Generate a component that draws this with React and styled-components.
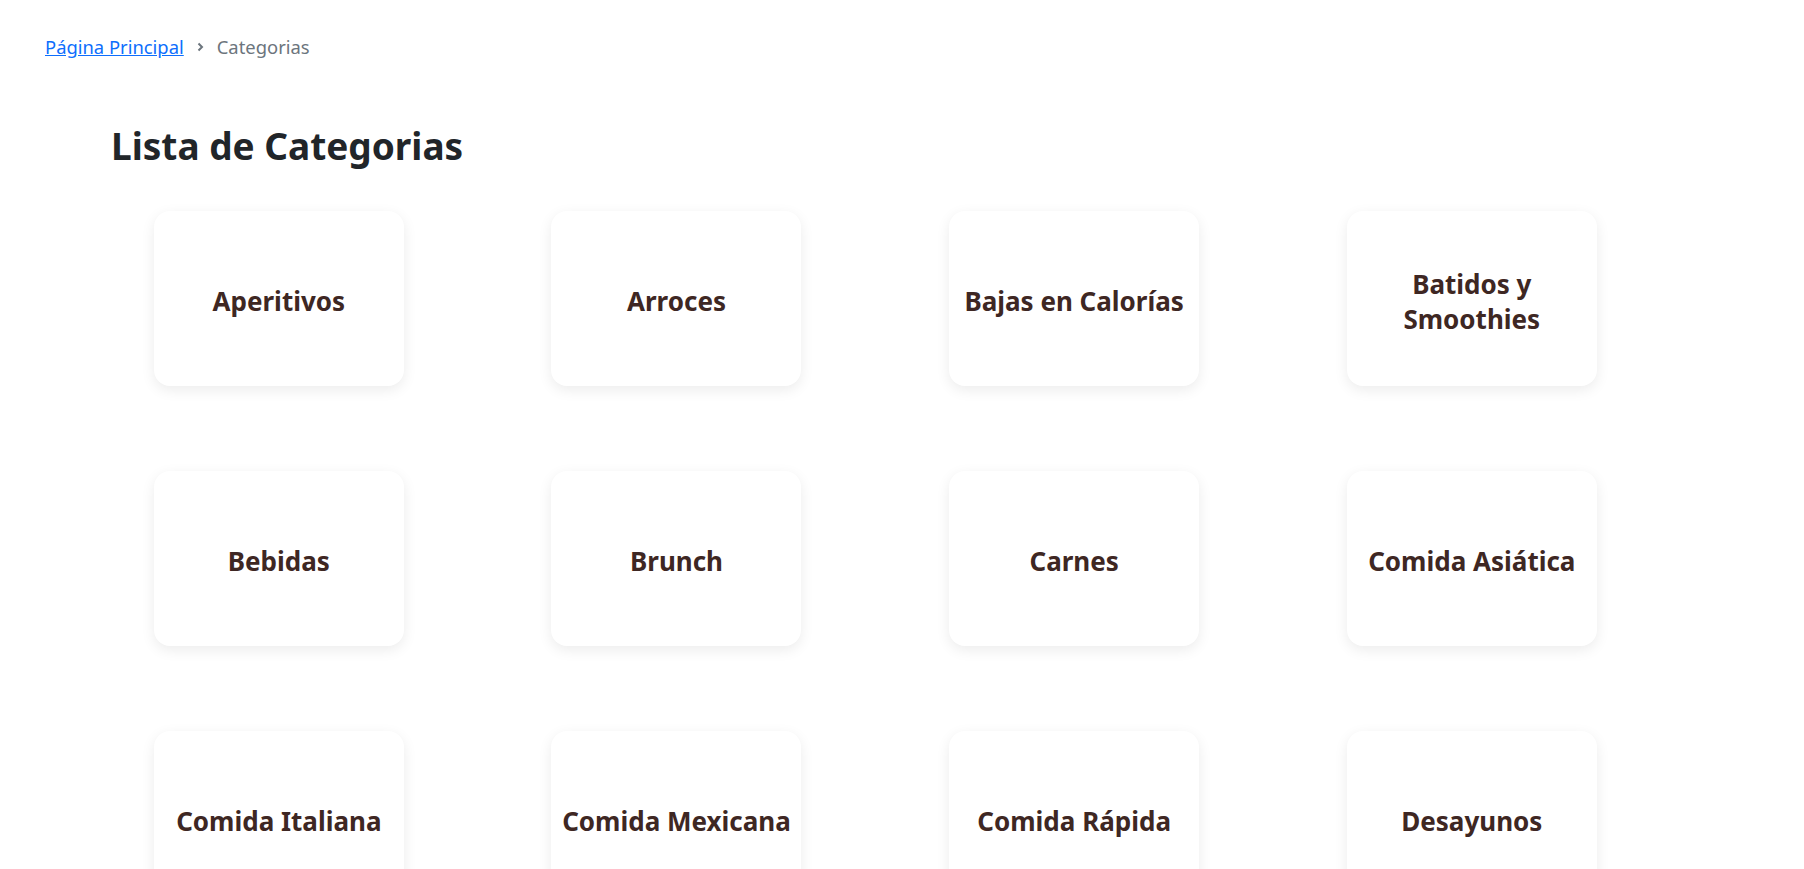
import React from 'react';
import styled, { createGlobalStyle } from 'styled-components';

const GlobalStyle = createGlobalStyle`
    body {
        margin: 0;
        background: #fff;
        font-family: "Noto Sans", "Open Sans", sans-serif;
        color: #212529;
    }
`;

const Page = styled.div`
    width: 100%;
    min-height: 869px;
`;

const Breadcrumb = styled.nav`
    display: flex;
    align-items: center;
    gap: 13px;
    padding: 34px 45px 0;
    font-size: 18.4px;
    line-height: 26px;
`;

const Crumb = styled.a`
    color: #0d6efd;
    text-decoration: underline;
    cursor: pointer;
`;

const Current = styled.span`
    color: #6c757d;
`;

const Divider = styled.svg`
    width: 7px;
    height: 10px;
    color: #6c757d;
`;

const Section = styled.section`
    padding: 64px 0 0 80px;
`;

const Title = styled.h1`
    margin: 0 0 43px 31px;
    font-size: 37px;
    font-weight: 700;
    line-height: 1.2;
    color: #212529;
`;

const Grid = styled.div`
    display: grid;
    grid-template-columns: repeat(4, 397.67px);
    row-gap: 85px;
    justify-items: center;
`;

const Card = styled.div`
    width: 250px;
    height: 175px;
    box-sizing: border-box;
    padding: 6px 4px 0;
    background: #fff;
    border-radius: 16px;
    box-shadow: 0 4px 14px rgba(0, 0, 0, 0.08);
    display: flex;
    align-items: center;
    justify-content: center;
    text-align: center;
`;

const CardTitle = styled.h3`
    margin: 0;
    font-size: 26px;
    font-weight: 700;
    line-height: 35px;
    color: #3e2723;
`;

const categories = [
    'Aperitivos', 'Arroces', 'Bajas en Calorías', 'Batidos y Smoothies',
    'Bebidas', 'Brunch', 'Carnes', 'Comida Asiática',
    'Comida Italiana', 'Comida Mexicana', 'Comida Rápida', 'Desayunos',
];

export default function App() {
    return (
        <Page>
            <GlobalStyle />
            <Breadcrumb>
                <Crumb>Página Principal</Crumb>
                <Divider viewBox="0 0 7 10">
                    <path d="M1.5 1.5 L5 5 L1.5 8.5" fill="none" stroke="currentColor" strokeWidth="2" />
                </Divider>
                <Current>Categorias</Current>
            </Breadcrumb>
            <Section>
                <Title>Lista de Categorias</Title>
                <Grid>
                    {categories.map(name => (
                        <Card key={name}>
                            <CardTitle>{name}</CardTitle>
                        </Card>
                    ))}
                </Grid>
            </Section>
        </Page>
    );
}
